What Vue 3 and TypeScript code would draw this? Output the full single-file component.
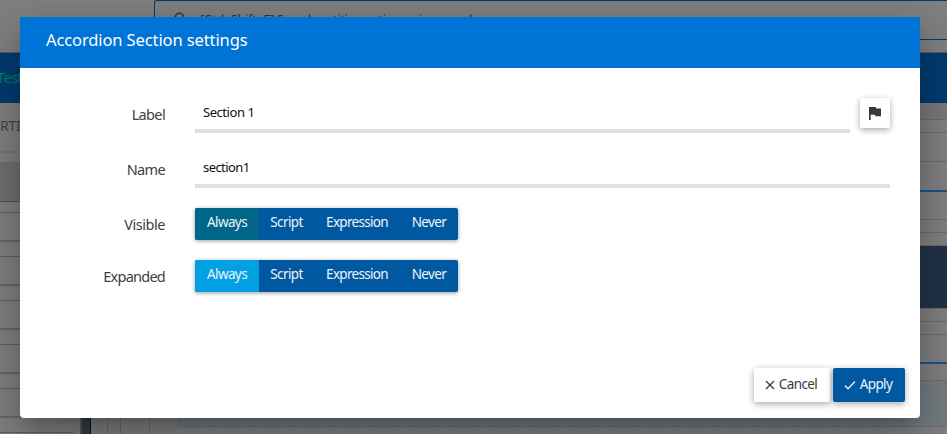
<script setup lang="ts">
import { ref } from 'vue'

type Mode = 'Always' | 'Script' | 'Expression' | 'Never'
const modes: Mode[] = ['Always', 'Script', 'Expression', 'Never']

const label = ref('Section 1')
const name = ref('section1')
const visible = ref<Mode>('Always')
const expanded = ref<Mode>('Always')
</script>

<template>
  <div class="screen">
    <div class="page">
      <header class="topbar">
        <div class="search">
          <svg class="lens" width="14" height="14" viewBox="0 0 14 14">
            <circle cx="5.5" cy="5.5" r="4.3" />
            <path d="M9 9l4 4" />
          </svg>
          <span>[Ctrl+Shift+F] Search entities, actions, views, and</span>
        </div>
      </header>
      <nav class="navbar"><span>Test</span></nav>
      <main class="workspace">
        <aside class="sidebar">
          <div class="tab">RTIES</div>
          <div class="group"></div>
          <div class="rows">
            <div v-for="n in 5" :key="n" class="row"></div>
            <div class="row short"></div>
          </div>
        </aside>
        <div class="splitter"></div>
        <section class="canvas">
          <div class="guide"></div>
          <div class="guide second"></div>
          <div class="sheet">
            <div class="strip s1"></div>
            <div class="strip s2"></div>
            <div class="strip s3"></div>
            <div class="strip blue tall"></div>
            <div class="strip s4"></div>
            <div class="strip s2"></div>
            <div class="strip s2"></div>
            <div class="banner"></div>
            <div class="strip s0"></div>
            <div class="strip s2"></div>
            <div class="strip s2"></div>
            <div class="strip blue s3"></div>
            <div class="dropzone"></div>
          </div>
        </section>
      </main>
    </div>

    <div class="overlay">
      <div class="dialog" role="dialog">
        <div class="title"><span>Accordion Section settings</span></div>
        <form class="form" @submit.prevent>
          <div class="field">
            <label class="l-label">Label</label>
            <input v-model="label" class="in-label" type="text" />
            <button class="flag" type="button" aria-label="Translate">
              <svg width="12" height="13" viewBox="0 0 12 13">
                <path d="M0 0h6.8l.5 1.4H12v7.8H6.5L6 7.8H1.7V13H0z" />
              </svg>
            </button>
          </div>
          <div class="field">
            <label class="l-name">Name</label>
            <input v-model="name" class="in-name" type="text" />
          </div>
          <div class="field choice">
            <label class="l-visible">Visible</label>
            <div class="segments">
              <button v-for="m in modes" :key="m" type="button" :class="[m.toLowerCase(), { focused: visible === m }]" @click="visible = m"><span>{{ m }}</span></button>
            </div>
          </div>
          <div class="field choice">
            <label class="l-expanded">Expanded</label>
            <div class="segments">
              <button v-for="m in modes" :key="m" type="button" :class="[m.toLowerCase(), { active: expanded === m }]" @click="expanded = m"><span>{{ m }}</span></button>
            </div>
          </div>
        </form>
        <footer class="actions">
          <button class="cancel" type="button">
            <svg width="10" height="10" viewBox="0 0 10 10"><path d="M1 1l8 8M9 1L1 9" /></svg>
            <span>Cancel</span>
          </button>
          <button class="apply" type="button">
            <svg width="12" height="10" viewBox="0 0 12 10"><path d="M1 5.5L4 8.7L11 1.5" /></svg>
            <span>Apply</span>
          </button>
        </footer>
      </div>
    </div>
  </div>
</template>

<style>
body { margin: 0; overflow: hidden; }
</style>

<style scoped>
* { box-sizing: border-box; }
.screen { position: relative; width: 947px; height: 434px; overflow: hidden; font-family: "Noto Sans", "Open Sans", sans-serif; }
.page { height: 434px; background: #808080; display: flex; flex-direction: column; }
.topbar { height: 53px; flex: none; padding-left: 154px; border-bottom: 1px solid #5c5c5c; }
.search { height: 40px; border: 1px solid #003c70; border-right: 0; border-radius: 3px 0 0 3px; padding: 0 0 2px 19px; display: flex; align-items: center; gap: 12px; color: #173b5c; font-size: 13px; letter-spacing: -.43px; white-space: nowrap; }
.lens { fill: none; stroke: #173b5c; stroke-width: 1.6; }
.navbar { height: 50px; flex: none; background: #003c70; color: #008068; font-size: 14.5px; letter-spacing: -.6px; line-height: 49px; }
.navbar span { margin-left: -3px; }
.workspace { flex: 1; display: flex; min-height: 0; }
.sidebar { width: 80px; flex: none; overflow: hidden; }
.tab { height: 50px; border-bottom: 2px solid #757575; color: #444; font-size: 14px; line-height: 46px; letter-spacing: -.3px; }
.group { height: 40px; margin-top: 9px; background: #707070; border-bottom: 1px solid #505050; }
.rows { padding-top: 10px; display: flex; flex-direction: column; gap: 14px; }
.row { height: 30px; flex: none; border-top: 1px solid #606060; border-bottom: 2px solid #666; }
.row.short { width: 74px; border-right: 1px solid #666; border-radius: 0 3px 0 0; }
.splitter { width: 11px; flex: none; background: #303d45; border-left: 2px solid #555; border-right: 1px solid #111; }
.canvas { flex: 1; display: flex; }
.guide { width: 17px; border-right: 1px solid #6c6c6c; }
.guide.second { width: 13px; }
.sheet { flex: 1; margin-left: 28px; border-left: 1px solid #6c6c6c; }
.strip { border-bottom: 1px solid #6c6c6c; }
.s0 { height: 1px; }
.s1 { height: 17px; background: #797979; }
.s2 { height: 13px; }
.s3 { height: 29px; }
.s4 { height: 28px; }
.tall { height: 30px; }
.strip.blue { border-bottom: 2px solid #1b5488; }
.banner { height: 62px; background: #213348; }
.dropzone { height: 47px; margin: 16px 0 0 28px; border: 1px dashed #626a70; border-right: 0; border-radius: 4px 0 0 4px; background: #757d82; }
.overlay { position: absolute; inset: 0; padding: 17px 27px 16px 20px; }
.dialog { width: 900px; height: 401px; background: #fff; border-radius: 0 0 4px 4px; display: flex; flex-direction: column; box-shadow: 0 11px 15px -7px rgba(0,0,0,.2), 0 24px 38px 3px rgba(0,0,0,.14), 0 9px 46px 8px rgba(0,0,0,.12); }
.title { height: 51px; flex: none; padding-left: 26px; background: #0074d6; color: #fff; font-size: 16.5px; line-height: 45px; letter-spacing: -.11px; white-space: nowrap; }
.form { flex: 1; padding: 30px 30px 0 0; }
.field { height: 55px; display: flex; align-items: flex-start; }
.field label { width: 145px; flex: none; margin-right: 30px; text-align: right; color: #404040; font-size: 14.5px; line-height: 32px; letter-spacing: -.75px; }
.field .l-label, .field .l-name { letter-spacing: -.65px; }
.field .l-visible { letter-spacing: -.45px; }
input { flex: 1; min-width: 0; height: 35px; padding: 0 8px 3px; border: 0; border-bottom: 4px solid #e0e0e0; border-radius: 0; outline: 0; background: none; color: #111; font: 13px "Noto Sans", sans-serif; letter-spacing: -.45px; }
.in-name { letter-spacing: -.58px; }
button { border: 0; padding: 0; font: inherit; }
.flag { width: 30px; height: 30px; margin-left: 10px; display: flex; align-items: center; justify-content: center; border-radius: 2px; background: #fff; box-shadow: 0 2px 6px rgba(0,0,0,.35); }
.flag svg { fill: #373b37; }
.field.choice { height: 52px; }
.segments { height: 32px; display: flex; border-radius: 2px; background: #0059a0; box-shadow: 0 1px 4px rgba(0,0,0,.4); }
.segments button { padding: 0 0 4px; background: transparent; color: #edf4fa; font-size: 13.5px; letter-spacing: -.6px; white-space: nowrap; }
.always { width: 64px; border-radius: 2px 0 0 2px; }
.script { width: 55px; }
.segments .expression { width: 86px; letter-spacing: -.7px; }
.never { width: 58px; }
.segments button.focused { background: #006688; }
.segments button.active { background: #00a0e3; }
.actions { height: 50px; padding-right: 15px; display: flex; justify-content: flex-end; gap: 3px; }
.actions button { height: 34px; display: flex; align-items: center; justify-content: center; gap: 4px; border-radius: 2px; font-size: 13.5px; letter-spacing: -.6px; box-shadow: 0 2px 7px rgba(0,0,0,.35); }
.actions button span { padding-bottom: 3px; }
.actions svg { fill: none; stroke: currentColor; stroke-width: 1.3; }
.actions .cancel { width: 76px; padding-right: 2px; background: #fff; color: #373b37; }
.actions .apply { width: 72px; padding-right: 2px; background: #0059a0; color: #edf4fa; }
</style>
